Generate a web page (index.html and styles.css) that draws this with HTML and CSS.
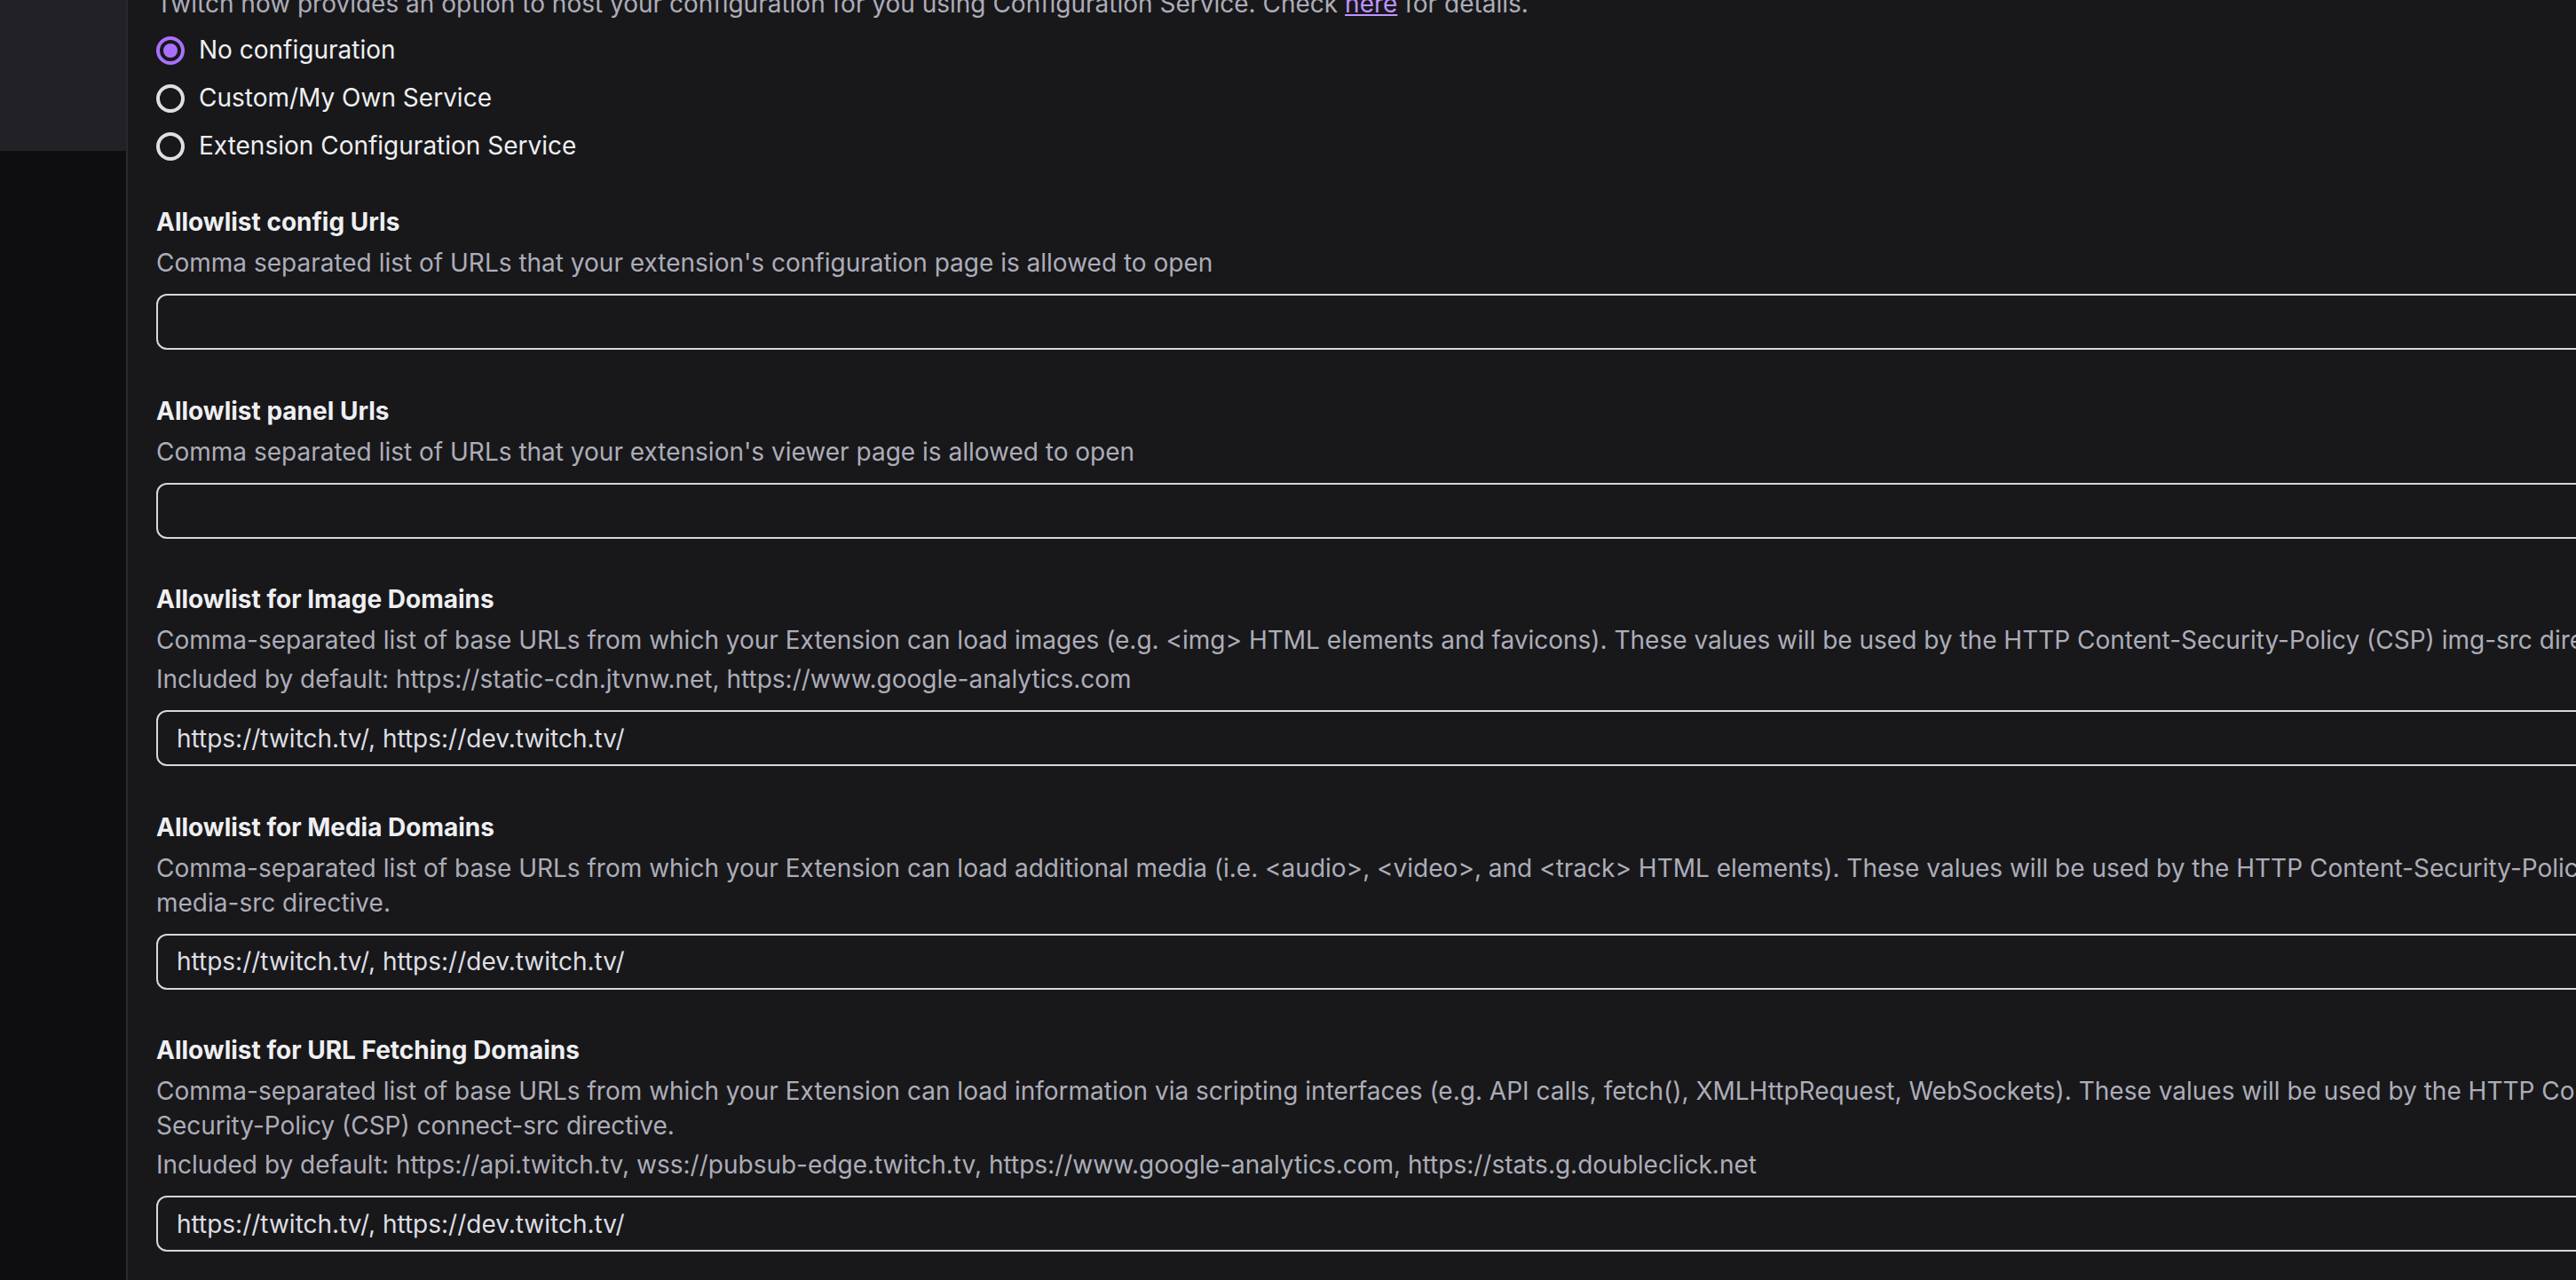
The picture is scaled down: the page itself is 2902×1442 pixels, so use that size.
FILE: index.html
```html
<!DOCTYPE html>
<html lang="en">
<head>
<meta charset="utf-8">
<title>Extension Capabilities</title>
<link rel="stylesheet" href="styles.css">
</head>
<body>
<div class="app">
  <aside class="sidebar">
    <div class="sidebar-top"></div>
  </aside>
  <main class="main">
    <div class="content">
      <p class="intro">Twitch now provides an option to host your configuration for you using Configuration Service. Check <a class="link" href="#">here</a> for details.</p>
      <div class="radios">
        <label class="radio"><span class="radio-dot checked"></span><span class="radio-text">No configuration</span></label>
        <label class="radio"><span class="radio-dot"></span><span class="radio-text">Custom/My Own Service</span></label>
        <label class="radio"><span class="radio-dot"></span><span class="radio-text">Extension Configuration Service</span></label>
      </div>

      <div class="field">
        <div class="label">Allowlist config Urls</div>
        <p class="desc">Comma separated list of URLs that your extension's configuration page is allowed to open</p>
        <input class="input" type="text" value="">
      </div>

      <div class="field">
        <div class="label">Allowlist panel Urls</div>
        <p class="desc">Comma separated list of URLs that your extension's viewer page is allowed to open</p>
        <input class="input" type="text" value="">
      </div>

      <div class="field">
        <div class="label">Allowlist for Image Domains</div>
        <p class="desc">Comma-separated list of base URLs from which your Extension can load images (e.g. &lt;img&gt; HTML elements and favicons). These values will be used by the HTTP Content-Security-Policy (CSP) img-src directive.</p>
        <p class="desc note">Included by default: https://static-cdn.jtvnw.net, https://www.google-analytics.com</p>
        <input class="input" type="text" value="https://twitch.tv/, https://dev.twitch.tv/">
      </div>

      <div class="field">
        <div class="label">Allowlist for Media Domains</div>
        <p class="desc">Comma-separated list of base URLs from which your Extension can load additional media (i.e. &lt;audio&gt;, &lt;video&gt;, and &lt;track&gt; HTML elements). These values will be used by the HTTP Content-Security-Policy (CSP) media-src directive.</p>
        <input class="input" type="text" value="https://twitch.tv/, https://dev.twitch.tv/">
      </div>

      <div class="field">
        <div class="label">Allowlist for URL Fetching Domains</div>
        <p class="desc">Comma-separated list of base URLs from which your Extension can load information via scripting interfaces (e.g. API calls, fetch(), XMLHttpRequest, WebSockets). These values will be used by the HTTP Content-Security-Policy (CSP) connect-src directive.</p>
        <p class="desc note">Included by default: https://api.twitch.tv, wss://pubsub-edge.twitch.tv, https://www.google-analytics.com, https://stats.g.doubleclick.net</p>
        <input class="input" type="text" value="https://twitch.tv/, https://dev.twitch.tv/">
      </div>
    </div>
  </main>
</div>
</body>
</html>
```
FILE: styles.css
```css
html, body {
  margin: 0;
  padding: 0;
  height: 100%;
}

body {
  background: #18181b;
  overflow: hidden;
  font-family: Inter, "Noto Sans", "Liberation Sans", sans-serif;
  font-size: 28px;
  line-height: 39px;
  color: #efeff1;
}

.app {
  display: flex;
  height: 1442px;
}

.sidebar {
  flex: none;
  width: 142px;
  background: #0e0e10;
  border-right: 2px solid #2a2a2e;
}

.sidebar-top {
  height: 170px;
  background: #212126;
}

.main {
  flex: none;
  width: 2870px;
  padding: 0 32px;
  background: #18181b;
}

.content {
  display: flex;
  flex-direction: column;
}

.intro {
  margin: -15px 0 0;
  color: #adadb8;
}

.link {
  color: #bf94ff;
  text-decoration: underline;
}

.radios {
  display: flex;
  flex-direction: column;
  gap: 15px;
  margin-top: 13px;
}

.radio {
  display: flex;
  align-items: center;
  gap: 16px;
  height: 39px;
  color: #efeff1;
}

.radio-dot {
  box-sizing: border-box;
  width: 32px;
  height: 32px;
  border: 4px solid #dedee3;
  border-radius: 50%;
  display: grid;
  place-items: center;
}

.radio-dot.checked {
  border-color: #a970ff;
}

.radio-dot.checked::after {
  content: "";
  width: 16px;
  height: 16px;
  border-radius: 50%;
  background: #a970ff;
}

.field {
  display: flex;
  flex-direction: column;
  margin-top: 49.5px;
}

.radios + .field {
  margin-top: 47px;
}

.label {
  font-weight: 700;
  color: #efeff1;
}

.desc {
  margin: 7px 0 0;
  color: #adadb8;
}

.desc.note {
  margin-top: 5px;
}

.input {
  box-sizing: border-box;
  display: block;
  width: 100%;
  height: 63px;
  margin: 15px 0 0;
  padding: 0 21px;
  border: 2px solid #d6d6dc;
  border-radius: 12px;
  background: #18181b;
  color: #dedee3;
  font-family: inherit;
  font-size: 28px;
  outline: none;
}
```
